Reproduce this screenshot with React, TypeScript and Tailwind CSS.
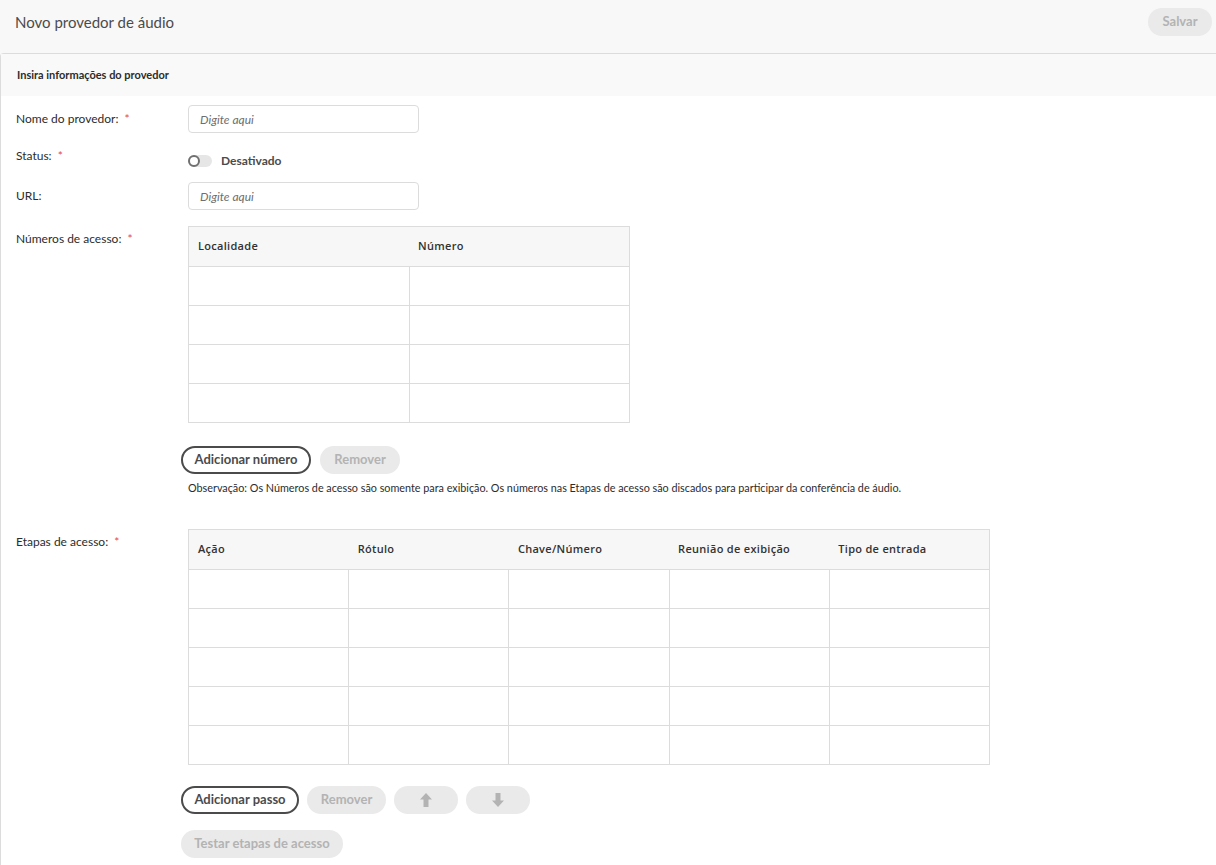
const Req = () => <span className="ml-[6px] text-[#e34850]">*</span>;

const ArrowUp = () => (
  <svg width="12" height="14" viewBox="0 0 12 14" fill="#b3b3b3">
    <path d="M6 0 L12 6.5 L8.5 6.5 L8.5 14 L3.5 14 L3.5 6.5 L0 6.5 Z" />
  </svg>
);

const ArrowDown = () => (
  <svg width="12" height="14" viewBox="0 0 12 14" fill="#b3b3b3">
    <path d="M6 14 L12 7.5 L8.5 7.5 L8.5 0 L3.5 0 L3.5 7.5 L0 7.5 Z" />
  </svg>
);

const Outline = ({ label, w }: { label: string; w: string }) => (
  <button className={`h-[28px] ${w} rounded-full border-2 border-[#4b4b4b] bg-white text-[13px] font-bold text-[#4b4b4b]`}>
    {label}
  </button>
);

const Disabled = ({ children, w }: { children: React.ReactNode; w: string }) => (
  <button className={`h-[28px] ${w} flex items-center justify-center rounded-full bg-[#eaeaea] text-[13px] font-bold text-[#b3b3b3]`}>
    {children}
  </button>
);

const Table = ({ cols, rows, width }: { cols: string[]; rows: number; width: string }) => (
  <table className={`${width} table-fixed border-collapse border border-[#dcdcdc]`} style={{ fontFamily: '"Open Sans", sans-serif' }}>
    <thead>
      <tr className="h-[40px] bg-[#f7f7f7]">
        {cols.map((c) => (
          <th key={c} className="border-b border-[#dcdcdc] pl-[9px] text-left text-[11px] font-semibold tracking-[0.3px] text-[#323232]">
            {c}
          </th>
        ))}
      </tr>
    </thead>
    <tbody>
      {Array.from({ length: rows }).map((_, i) => (
        <tr key={i} className="h-[39px]">
          {cols.map((c) => (
            <td key={c} className="border border-[#dcdcdc]"></td>
          ))}
        </tr>
      ))}
    </tbody>
  </table>
);

export default function App() {
  return (
    <div className="min-h-[865px] bg-[#f8f8f8] text-[#323232]" style={{ fontFamily: 'Lato, "Noto Sans", sans-serif' }}>
      <div className="flex h-[44px] items-center justify-between pl-[15px] pr-[4px]">
        <h1 className="text-[15px] text-[#4b4b4b]">Novo provedor de áudio</h1>
        <Disabled w="w-[64px]">Salvar</Disabled>
      </div>

      <div className="mt-[9px] min-h-[812px] rounded-tl-[4px] border-t border-l border-[#dcdcdc] bg-white">
        <div className="flex h-[42px] items-center bg-[#f9f9f9] pl-[16px] text-[11px] font-bold text-[#2c2c2c]">
          Insira informações do provedor
        </div>

        <div className="pl-[15px] text-[12px] text-[#2c2c2c]">
          <div className="mt-[9px] flex items-center">
            <div className="w-[172px]">Nome do provedor:<Req /></div>
            <input
              placeholder="Digite aqui"
              className="h-[28px] w-[231px] rounded-[4px] border border-[#dcdcdc] px-[11px] text-[12px] italic placeholder:text-[#6e6e6e]"
            />
          </div>

          <div className="mt-[14px] flex">
            <div className="w-[172px] leading-[18px]">Status:<Req /></div>
            <div className="mt-[5px] flex h-[18px] items-center">
              <div className="relative h-[12px] w-[24px] rounded-full bg-[#e6e6e6]">
                <div className="absolute left-0 top-0 h-[12px] w-[12px] rounded-full border-2 border-[#707070] bg-white" />
              </div>
              <span className="ml-[9px] text-[12px] font-bold text-[#4b4b4b]">Desativado</span>
            </div>
          </div>

          <div className="mt-[12px] flex items-center">
            <div className="w-[172px]">URL:</div>
            <input
              placeholder="Digite aqui"
              className="h-[28px] w-[231px] rounded-[4px] border border-[#dcdcdc] px-[11px] text-[12px] italic placeholder:text-[#6e6e6e]"
            />
          </div>

          <div className="mt-[16px] flex">
            <div className="w-[172px] pt-[4px] leading-[18px]">Números de acesso:<Req /></div>
            <div>
              <Table cols={["Localidade", "Número"]} rows={4} width="w-[442px]" />
              <div className="mt-[23px] -ml-[7px] flex gap-[9px]">
                <Outline label="Adicionar número" w="w-[130px]" />
                <Disabled w="w-[80px]">Remover</Disabled>
              </div>
              <p className="mt-[6px] text-[10.8px] leading-[16px] text-[#2c2c2c]">
                Observação: Os Números de acesso são somente para exibição. Os números nas Etapas de acesso são discados para participar da conferência de áudio.
              </p>
            </div>
          </div>

          <div className="mt-[33px] flex">
            <div className="w-[172px] pt-[4px] leading-[18px]">Etapas de acesso:<Req /></div>
            <div>
              <Table cols={["Ação", "Rótulo", "Chave/Número", "Reunião de exibição", "Tipo de entrada"]} rows={5} width="w-[802px]" />
              <div className="mt-[21px] -ml-[7px] flex gap-[8px]">
                <Outline label="Adicionar passo" w="w-[118px]" />
                <Disabled w="w-[79px]">Remover</Disabled>
                <Disabled w="w-[64px]"><ArrowUp /></Disabled>
                <Disabled w="w-[64px]"><ArrowDown /></Disabled>
              </div>
              <div className="mt-[16px] -ml-[7px] pb-[8px]">
                <Disabled w="w-[162px]">Testar etapas de acesso</Disabled>
              </div>
            </div>
          </div>
        </div>
      </div>
    </div>
  );
}
